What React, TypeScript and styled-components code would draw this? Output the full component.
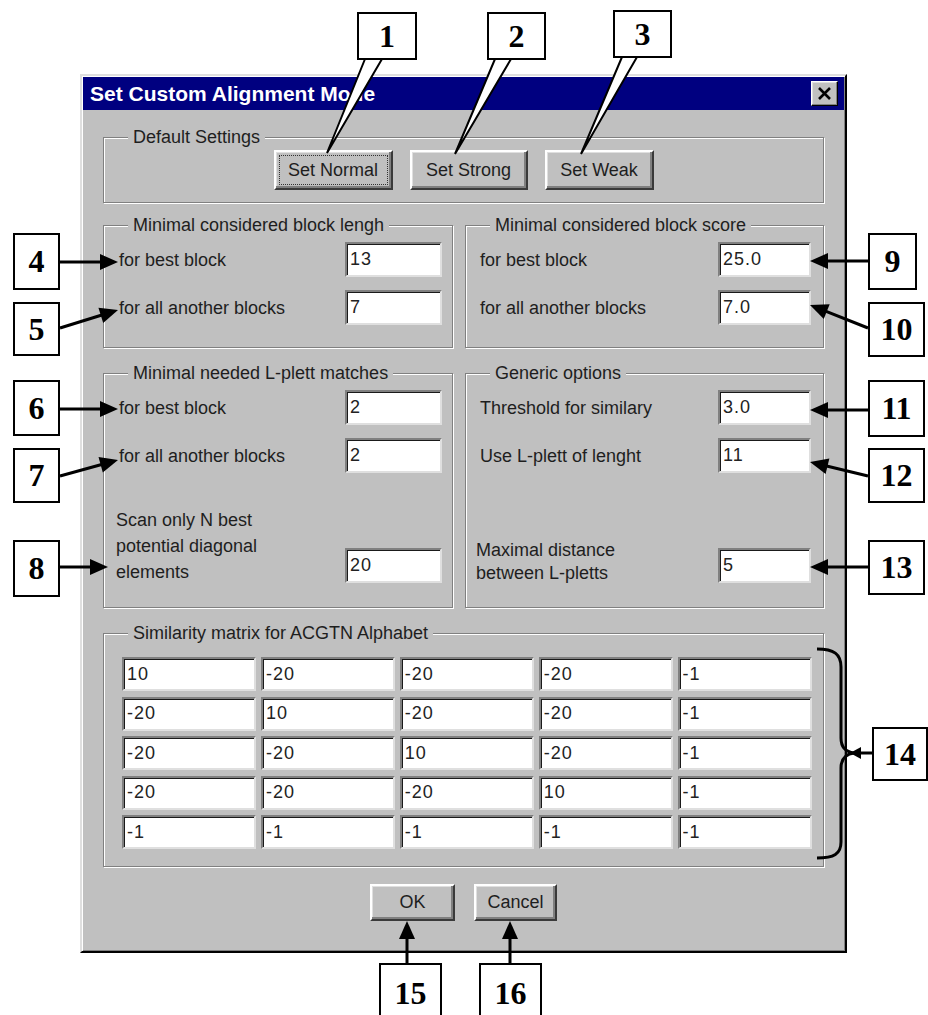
import React from "react";
import styled, { createGlobalStyle, css } from "styled-components";

const GlobalStyle = createGlobalStyle`
  html, body {
    margin: 0;
    padding: 0;
    background: #ffffff;
  }
  body {
    font-family: "Liberation Sans", Arial, sans-serif;
  }
`;

const Canvas = styled.div`
  position: relative;
  width: 928px;
  height: 1015px;
  box-sizing: border-box;
  padding: 74px 0 0 80px;
  overflow: hidden;
  background: #ffffff;
`;

const Window = styled.div`
  width: 767px;
  height: 879px;
  box-sizing: border-box;
  display: flex;
  flex-direction: column;
  padding: 1px;
  background: #c0c0c0;
  border: 2px solid;
  border-color: #dfdfdf #000000 #000000 #dfdfdf;
  box-shadow: inset 1px 1px 0 #ffffff, inset -1px -1px 0 #808080;
`;

const TitleBar = styled.div`
  flex: none;
  height: 33px;
  display: flex;
  align-items: center;
  justify-content: space-between;
  padding: 0 6px 0 7px;
  background: #000080;
`;

const Title = styled.span`
  color: #ffffff;
  font-weight: bold;
  font-size: 21px;
  line-height: 24px;
  white-space: nowrap;
`;

const CloseButton = styled.button`
  width: 27px;
  height: 25px;
  box-sizing: border-box;
  padding: 0;
  display: flex;
  align-items: center;
  justify-content: center;
  background: #c0c0c0;
  border: 1px solid;
  border-color: #ffffff #000000 #000000 #ffffff;
  box-shadow: inset -1px -1px 0 #808080, inset 1px 1px 0 #dfdfdf;
`;

const Body = styled.div`
  flex: 1;
  display: flex;
  flex-direction: column;
  padding: 17px 20px 0 20px;
`;

const Group = styled.fieldset`
  margin: 0;
  padding: 0;
  min-width: 0;
  display: flex;
  flex-direction: column;
  border: 1px solid #808080;
  box-shadow: 1px 1px 0 #ffffff, inset 1px 1px 0 #ffffff;
`;

const Legend = styled.legend`
  margin-left: 24px;
  padding: 0 5px;
  font-size: 18px;
  line-height: 20px;
  color: #1e1e1e;
  background: #c0c0c0;
`;

const GroupBody = styled.div<{ $pad: string }>`
  flex: 1;
  display: flex;
  flex-direction: column;
  padding: ${(p) => p.$pad};
`;

const Columns = styled.div<{ $mt: number }>`
  display: grid;
  grid-template-columns: 350px 1fr;
  column-gap: 12px;
  margin-top: ${(p) => p.$mt}px;
`;

const Section = styled.div<{ $mt: number }>`
  margin-top: ${(p) => p.$mt}px;
`;

const FieldRow = styled.div<{ $mt?: string; $bottom?: boolean }>`
  display: flex;
  align-items: ${(p) => (p.$bottom ? "flex-end" : "center")};
  justify-content: space-between;
  min-height: 35px;
  margin-top: ${(p) => p.$mt ?? "0"};
`;

const FieldLabel = styled.span<{ $lh?: number; $shift?: number }>`
  font-size: 18px;
  line-height: ${(p) => p.$lh ?? 24}px;
  margin-left: ${(p) => p.$shift ?? 0}px;
  color: #1e1e1e;
  white-space: nowrap;
`;

const TextBox = styled.input<{ $w?: number; $lift?: number }>`
  box-sizing: border-box;
  width: ${(p) => (p.$w ? `${p.$w}px` : "100%")};
  height: ${(p) => (p.$w ? "35px" : "100%")};
  margin: 0 0 ${(p) => p.$lift ?? 0}px 0;
  padding: 0 0 0 3px;
  background: #ffffff;
  border: 2px solid;
  border-color: #808080 #dfdfdf #dfdfdf #808080;
  box-shadow: inset 1px 1px 0 #1a1a1a;
  font-family: "Liberation Sans", Arial, sans-serif;
  font-size: 18px;
  letter-spacing: 1px;
  color: #222222;
  outline: none;
`;

const ButtonRow = styled.div<{ $mt: number; $gap: number }>`
  display: flex;
  justify-content: center;
  gap: ${(p) => p.$gap}px;
  margin-top: ${(p) => p.$mt}px;
`;

const PushButton = styled.button<{ $w: number; $h: number; $focused?: boolean }>`
  box-sizing: border-box;
  width: ${(p) => p.$w}px;
  height: ${(p) => p.$h}px;
  padding: 0;
  background: #c0c0c0;
  border: 2px solid;
  border-color: #ffffff #3a3a3a #3a3a3a #ffffff;
  box-shadow: inset -2px -2px 0 #808080, inset 1px 1px 0 #dfdfdf;
  font-family: "Liberation Sans", Arial, sans-serif;
  font-size: 18px;
  color: #1e1e1e;
  ${(p) =>
    p.$focused &&
    css`
      outline: 1px dotted #333333;
      outline-offset: -6px;
    `}
`;

const MatrixGrid = styled.div`
  display: grid;
  grid-template-columns: repeat(5, 1fr);
  grid-auto-rows: 34px;
  column-gap: 4.5px;
  row-gap: 5.5px;
`;

const Overlay = styled.svg`
  position: absolute;
  left: 0;
  top: 0;
  pointer-events: none;
`;

const Callout = styled.div<{ $x: number; $y: number; $w: number; $h: number }>`
  position: absolute;
  left: ${(p) => p.$x}px;
  top: ${(p) => p.$y}px;
  width: ${(p) => p.$w}px;
  height: ${(p) => p.$h}px;
  box-sizing: border-box;
  display: flex;
  align-items: center;
  justify-content: center;
  background: #ffffff;
  border: 2px solid #000000;
  font-family: "Liberation Serif", "Times New Roman", serif;
  font-weight: bold;
  font-size: 32px;
  color: #000000;
`;

type Pt = [number, number];

interface Mark {
  n: string;
  box: [number, number, number, number];
  arrow?: [Pt, Pt];
  tail?: [Pt, Pt, Pt];
}

const marks: Mark[] = [
  { n: "1", box: [357, 12, 60, 48], tail: [[365, 59], [327, 153], [382, 59]] },
  { n: "2", box: [487, 12, 59, 48], tail: [[495, 59], [455, 154], [511, 59]] },
  { n: "3", box: [613, 10, 59, 48], tail: [[622, 57], [581, 154], [637, 57]] },
  { n: "4", box: [13, 233, 47, 57], arrow: [[60, 262], [118, 262]] },
  { n: "5", box: [13, 302, 47, 54], arrow: [[60, 328], [118, 310]] },
  { n: "6", box: [13, 380, 47, 56], arrow: [[60, 409], [118, 409]] },
  { n: "7", box: [13, 448, 47, 55], arrow: [[60, 476], [118, 460]] },
  { n: "8", box: [13, 540, 47, 57], arrow: [[60, 567], [108, 567]] },
  { n: "9", box: [868, 233, 49, 57], arrow: [[868, 261], [810, 261]] },
  { n: "10", box: [868, 302, 57, 55], arrow: [[868, 328], [810, 305]] },
  { n: "11", box: [868, 380, 57, 57], arrow: [[868, 410], [810, 410]] },
  { n: "12", box: [868, 448, 57, 55], arrow: [[868, 476], [810, 462]] },
  { n: "13", box: [868, 540, 57, 55], arrow: [[868, 567], [810, 567]] },
  { n: "14", box: [872, 727, 56, 54] },
  { n: "15", box: [379, 963, 63, 60], arrow: [[407, 963], [407, 921]] },
  { n: "16", box: [479, 963, 63, 60], arrow: [[510, 963], [510, 921]] },
];

const HEAD_LEN = 18;
const HEAD_HALF = 8;

function arrowParts(from: Pt, to: Pt) {
  const dx = to[0] - from[0];
  const dy = to[1] - from[1];
  const len = Math.hypot(dx, dy);
  const ux = dx / len;
  const uy = dy / len;
  const bx = to[0] - ux * HEAD_LEN;
  const by = to[1] - uy * HEAD_LEN;
  const px = -uy * HEAD_HALF;
  const py = ux * HEAD_HALF;
  return {
    line: [from[0], from[1], bx + ux * 2, by + uy * 2],
    head: `${to[0]},${to[1]} ${bx + px},${by + py} ${bx - px},${by - py}`,
  };
}

const matrix = [
  ["10", "-20", "-20", "-20", "-1"],
  ["-20", "10", "-20", "-20", "-1"],
  ["-20", "-20", "10", "-20", "-1"],
  ["-20", "-20", "-20", "10", "-1"],
  ["-1", "-1", "-1", "-1", "-1"],
];

const Annotations = () => (
  <Overlay width={928} height={1015} viewBox="0 0 928 1015">
    {marks.map((m) => {
      if (m.tail) {
        const pts = m.tail.map((p) => p.join(",")).join(" ");
        return (
          <polyline
            key={m.n}
            points={pts}
            fill="#ffffff"
            stroke="#000000"
            strokeWidth={2}
            strokeLinejoin="miter"
          />
        );
      }
      if (m.arrow) {
        const a = arrowParts(m.arrow[0], m.arrow[1]);
        return (
          <g key={m.n}>
            <line
              x1={a.line[0]}
              y1={a.line[1]}
              x2={a.line[2]}
              y2={a.line[3]}
              stroke="#000000"
              strokeWidth={3}
            />
            <polygon points={a.head} fill="#000000" />
          </g>
        );
      }
      return null;
    })}
    {/* brace around the matrix, pointing at 14 */}
    <path
      d="M 817 649 C 834 649, 841 654, 841 667 L 841 738 C 841 748, 846 752, 854 753 C 846 754, 841 758, 841 768 L 841 842 C 841 854, 834 858, 817 858"
      fill="none"
      stroke="#000000"
      strokeWidth={3}
    />
    <line x1={856} y1={753} x2={872} y2={753} stroke="#000000" strokeWidth={3} />
    <polygon points="850,753 861,747 861,759" fill="#000000" />
  </Overlay>
);

export default function App() {
  return (
    <>
      <GlobalStyle />
      <Canvas>
        <Window>
          <TitleBar>
            <Title>Set Custom Alignment Mode</Title>
            <CloseButton aria-label="Close">
              <svg width="15" height="13" viewBox="0 0 15 13">
                <path d="M2 1 L13 12 M13 1 L2 12" stroke="#000" strokeWidth="2.6" />
              </svg>
            </CloseButton>
          </TitleBar>
          <Body>
            <Group>
              <Legend>Default Settings</Legend>
              <GroupBody $pad="3px 0 12px 0">
                <ButtonRow $mt={0} $gap={17}>
                  <PushButton $w={119} $h={40} $focused>
                    Set Normal
                  </PushButton>
                  <PushButton $w={118} $h={40}>
                    Set Strong
                  </PushButton>
                  <PushButton $w={109} $h={40}>
                    Set Weak
                  </PushButton>
                </ButtonRow>
              </GroupBody>
            </Group>

            <Columns $mt={12}>
              <Group>
                <Legend>Minimal considered block lengh</Legend>
                <GroupBody $pad="7px 10px 22px 15px">
                  <FieldRow>
                    <FieldLabel>for best block</FieldLabel>
                    <TextBox $w={97} readOnly defaultValue="13" />
                  </FieldRow>
                  <FieldRow $mt="13px">
                    <FieldLabel>for all another blocks</FieldLabel>
                    <TextBox $w={97} readOnly defaultValue="7" />
                  </FieldRow>
                </GroupBody>
              </Group>
              <Group>
                <Legend>Minimal considered block score</Legend>
                <GroupBody $pad="7px 12px 22px 14px">
                  <FieldRow>
                    <FieldLabel>for best block</FieldLabel>
                    <TextBox $w={93} readOnly defaultValue="25.0" />
                  </FieldRow>
                  <FieldRow $mt="13px">
                    <FieldLabel>for all another blocks</FieldLabel>
                    <TextBox $w={93} readOnly defaultValue="7.0" />
                  </FieldRow>
                </GroupBody>
              </Group>
            </Columns>

            <Columns $mt={15}>
              <Group>
                <Legend>Minimal needed L-plett matches</Legend>
                <GroupBody $pad="7px 10px 22px 15px">
                  <FieldRow>
                    <FieldLabel>for best block</FieldLabel>
                    <TextBox $w={97} readOnly defaultValue="2" />
                  </FieldRow>
                  <FieldRow $mt="13px">
                    <FieldLabel>for all another blocks</FieldLabel>
                    <TextBox $w={97} readOnly defaultValue="2" />
                  </FieldRow>
                  <FieldRow $mt="34px" $bottom>
                    <FieldLabel $lh={26} $shift={-3}>
                      Scan only N best
                      <br />
                      potential diagonal
                      <br />
                      elements
                    </FieldLabel>
                    <TextBox $w={97} $lift={2} readOnly defaultValue="20" />
                  </FieldRow>
                </GroupBody>
              </Group>
              <Group>
                <Legend>Generic options</Legend>
                <GroupBody $pad="7px 12px 22px 14px">
                  <FieldRow>
                    <FieldLabel>Threshold for similary</FieldLabel>
                    <TextBox $w={93} readOnly defaultValue="3.0" />
                  </FieldRow>
                  <FieldRow $mt="13px">
                    <FieldLabel>Use L-plett of lenght</FieldLabel>
                    <TextBox $w={93} readOnly defaultValue="11" />
                  </FieldRow>
                  <FieldRow $mt="auto" $bottom>
                    <FieldLabel $lh={23} $shift={-4}>
                      Maximal distance
                      <br />
                      between L-pletts
                    </FieldLabel>
                    <TextBox $w={93} $lift={2} readOnly defaultValue="5" />
                  </FieldRow>
                </GroupBody>
              </Group>
            </Columns>

            <Section $mt={15}>
              <Group>
                <Legend>Similarity matrix for ACGTN Alphabet</Legend>
                <GroupBody $pad="14px 11px 17px 18px">
                  <MatrixGrid>
                    {matrix.map((row, r) =>
                      row.map((v, c) => (
                        <TextBox key={`${r}-${c}`} readOnly defaultValue={v} />
                      ))
                    )}
                  </MatrixGrid>
                </GroupBody>
              </Group>
            </Section>

            <ButtonRow $mt={17} $gap={19}>
              <PushButton $w={85} $h={37}>
                OK
              </PushButton>
              <PushButton $w={83} $h={37}>
                Cancel
              </PushButton>
            </ButtonRow>
          </Body>
        </Window>
        <Annotations />
        {marks.map((m) => (
          <Callout key={m.n} $x={m.box[0]} $y={m.box[1]} $w={m.box[2]} $h={m.box[3]}>
            {m.n}
          </Callout>
        ))}
      </Canvas>
    </>
  );
}
